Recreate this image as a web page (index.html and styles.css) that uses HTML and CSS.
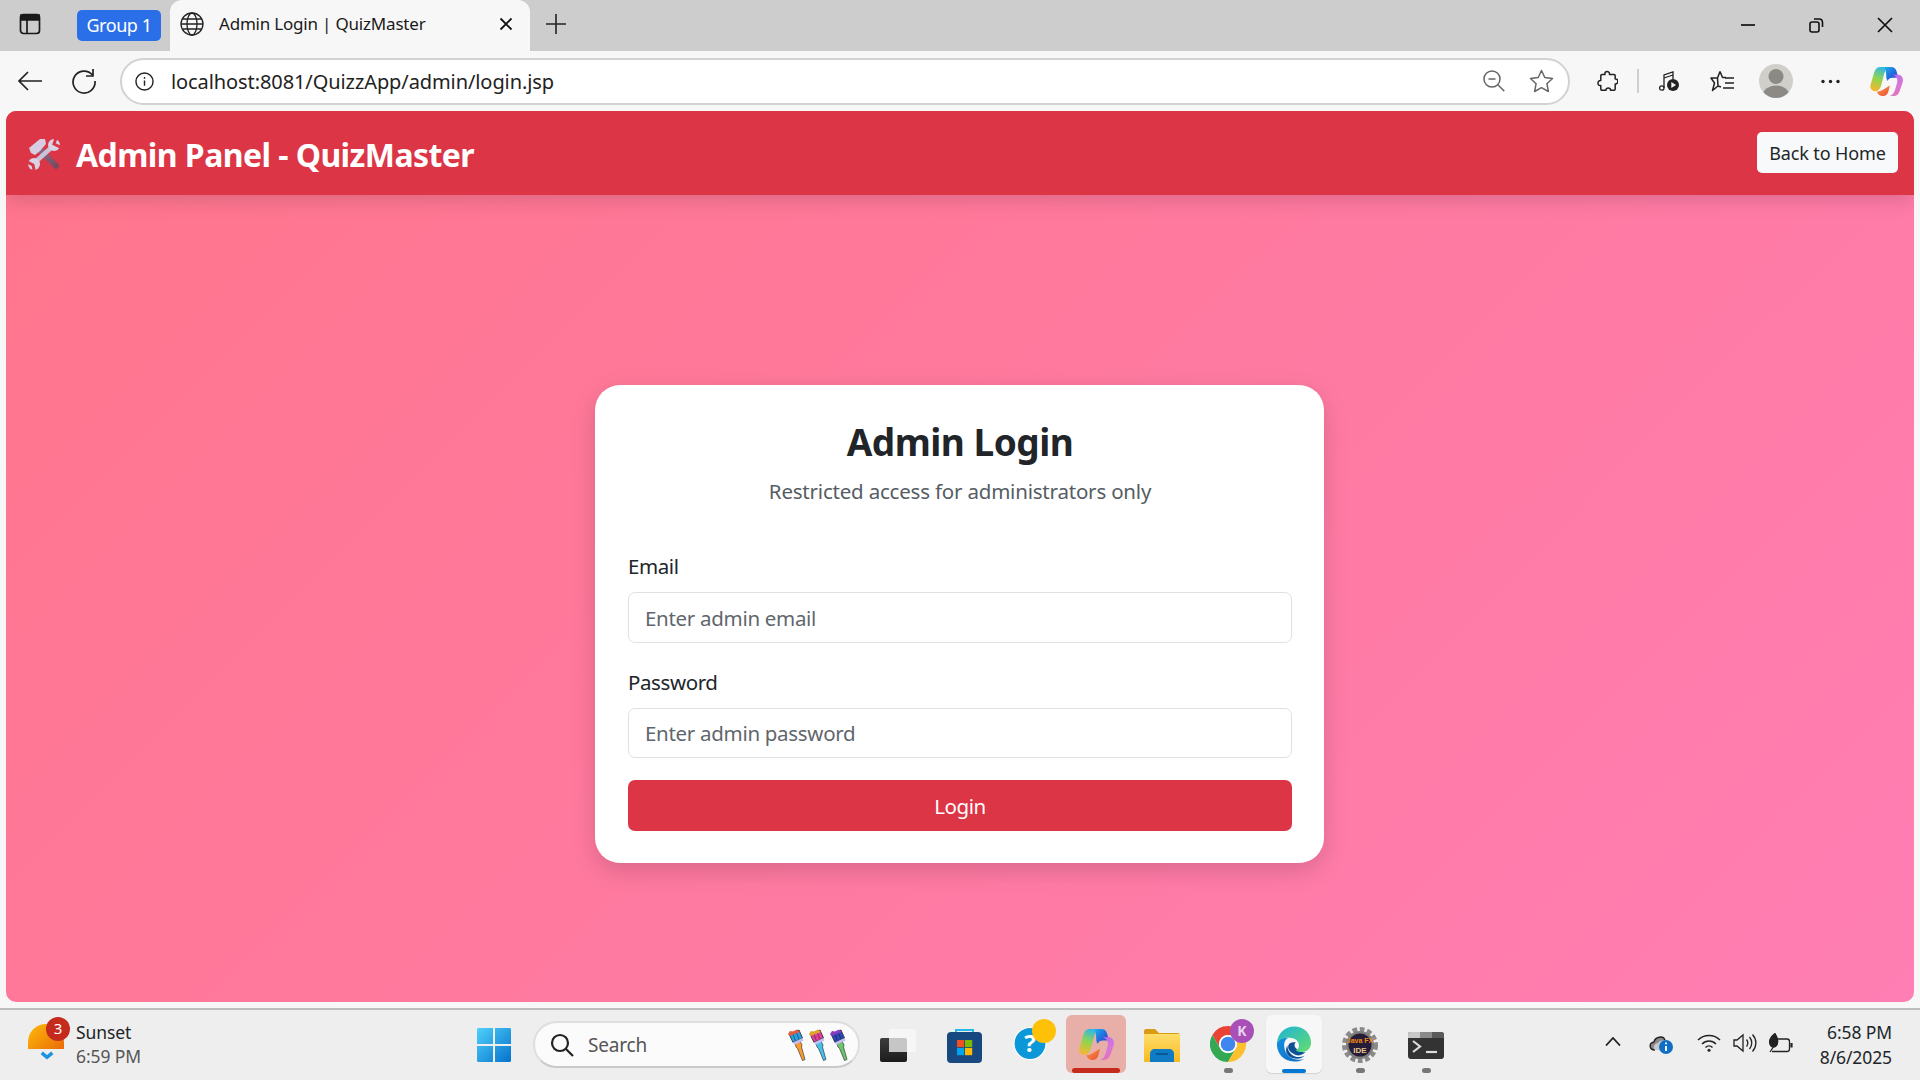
FILE: index.html
```html
<!DOCTYPE html>
<html lang="en">
<head>
  <meta charset="UTF-8">
  <meta name="viewport" content="width=device-width, initial-scale=1.0">
  <title>Admin Login | QuizMaster</title>
  <link rel="stylesheet" href="styles.css">
</head>
<body>
  <svg class="defs" width="0" height="0">
    <defs>
      <linearGradient id="copilotA" x1="0" y1="0" x2="1" y2="1">
        <stop offset="0" stop-color="#18b4ee"/><stop offset=".6" stop-color="#2560dc"/><stop offset="1" stop-color="#5a48d8"/>
      </linearGradient>
      <linearGradient id="copilotB" x1=".6" y1="0" x2=".3" y2="1">
        <stop offset="0" stop-color="#2fb8e8"/><stop offset=".5" stop-color="#8fd54e"/><stop offset="1" stop-color="#f8b62e"/>
      </linearGradient>
      <linearGradient id="copilotC" x1="0" y1="0" x2="1" y2="1">
        <stop offset="0" stop-color="#f6a13a"/><stop offset="1" stop-color="#ee4a3c"/>
      </linearGradient>
      <linearGradient id="copilotD" x1=".2" y1="0" x2=".8" y2="1">
        <stop offset="0" stop-color="#b86cf0"/><stop offset=".6" stop-color="#d877d8"/><stop offset="1" stop-color="#f0709a"/>
      </linearGradient>
      <symbol id="copilot" viewBox="0 0 34 32">
        <path fill="url(#copilotB)" d="M10 1h10c-3 1.500-4.500 4-5.500 7.500L11.500 20c-1 4-3.500 6-6.500 6-3.500 0-5.500-3-4.500-6.500L4 7.500C5 3.500 7 1 10 1z"/>
        <path fill="url(#copilotA)" d="M15 1h7c2.500 0 4.500 1.500 5.200 4l2 7h-6c-2.500 0-4.200 1-5 3.500L17 13c-.5-2 0-8-2-12z"/>
        <path fill="url(#copilotD)" d="M23 9h6c3 0 5 2.500 5 5.500 0 1-.2 2-.5 3l-3 8.500c-1.200 3.500-3.500 5-6 5h-4c3-1 4.500-3.500 5.500-7l2-7c.8-3.500-.5-6.500-5-8z"/>
        <path fill="url(#copilotC)" d="M7 26c2 .5 3.500 0 5.500-1l8-5-1.500 6c-.8 3-2.500 5-5.500 5h-1c-2 0-3.500-1-4.500-2.500z"/>
      </symbol>
      <symbol id="brush" viewBox="0 0 20 32">
        <path fill="currentColor" stroke="#222" stroke-width=".6" d="M8 14l5-2 2 4-.5 2 3.500 12.500-2.500 1-5-12-1.500-1.500z"/>
        <path d="M2 5l10-4 3.500 8-9.500 4.500z" fill="var(--tip)" stroke="#222" stroke-width=".8"/>
        <path d="M5.500 4l2.800 7.500M9 3l3 7" stroke="#111" stroke-opacity=".45" stroke-width="1" fill="none"/>
        <path d="M1 5l2-3 3 .5 4-2 3 2.500L2.500 7z" fill="var(--cap)"/>
        <path d="M6 13.500l9.500-4.500 1 2.500L7.500 16z" fill="#c4bff2"/>
      </symbol>
    </defs>
  </svg>

  <div class="tabstrip">
    <svg class="sidebar-icon" width="24" height="24" viewBox="0 0 24 24" fill="none" stroke="#1a1a1a" stroke-width="1.700">
      <rect x="2.500" y="2.500" width="19" height="19" rx="3"/>
      <path d="M3 3h18v5H3z" fill="#1a1a1a"/>
      <path d="M9 8v13"/>
    </svg>
    <span class="tab-group">Group 1</span>
    <div class="tab">
      <svg width="24" height="24" viewBox="0 0 24 24" fill="none" stroke="#222" stroke-width="1.300">
        <circle cx="12" cy="12" r="11"/>
        <ellipse cx="12" cy="12" rx="5" ry="11"/>
        <path d="M1 12h22M2.500 7h19M2.500 17h19"/>
      </svg>
      <span class="tab-title">Admin Login | QuizMaster</span>
      <svg class="tab-close" width="14" height="14" viewBox="0 0 14 14" stroke="#111" stroke-width="1.800"><path d="M1.500 1.500l11 11M12.500 1.500l-11 11"/></svg>
    </div>
    <svg class="new-tab" width="22" height="22" viewBox="0 0 22 22" stroke="#222" stroke-width="1.600"><path d="M11 1v20M1 11h20"/></svg>
    <div class="window-btns">
      <svg width="16" height="16" viewBox="0 0 16 16" stroke="#111" stroke-width="1.700"><path d="M1 8h14"/></svg>
      <svg width="16" height="16" viewBox="0 0 16 16" fill="none" stroke="#111" stroke-width="1.600"><rect x="2" y="5" width="9" height="10" rx="2"/><path d="M6 2h5c2 0 3.500 1.500 3.500 3.500V10"/></svg>
      <svg width="18" height="18" viewBox="0 0 18 18" stroke="#111" stroke-width="1.700"><path d="M2 2l14 14M16 2L2 16"/></svg>
    </div>
  </div>

  <div class="toolbar">
    <svg class="tool-back" width="26" height="24" viewBox="0 0 26 24" fill="none" stroke="#222" stroke-width="1.700"><path d="M25 12H2M11 3l-9 9 9 9"/></svg>
    <svg class="tool-reload" width="26" height="26" viewBox="0 0 26 26" fill="none" stroke="#222" stroke-width="1.700"><path d="M21.500 7A11 11 0 1 0 24 13"/><path d="M22 1v7h-7"/></svg>
    <div class="address-bar">
      <svg width="19" height="19" viewBox="0 0 20 20" fill="none" stroke="#222" stroke-width="1.500"><circle cx="10" cy="10" r="9"/><path d="M10 9v5.500M10 5.200v1.800"/></svg>
      <span class="url">localhost:8081/QuizzApp/admin/login.jsp</span>
      <svg class="addr-zoom" width="22" height="22" viewBox="0 0 22 22" fill="none" stroke="#666" stroke-width="1.500"><circle cx="9" cy="9" r="8"/><path d="M5.500 9h7M14.800 14.800l6.500 6.500"/></svg>
      <svg class="addr-star" width="25" height="24" viewBox="0 0 25 24" fill="none" stroke="#666" stroke-width="1.500" stroke-linejoin="round"><path d="M12.500 1.500l3.300 7 7.700 1-5.600 5.200 1.500 7.800-6.900-3.800-6.900 3.800 1.500-7.800L1.500 9.500l7.700-1z"/></svg>
    </div>
    <div class="tool-icons">
      <svg class="ti-ext" width="21" height="23" viewBox="0 0 21 23" fill="none" stroke="#222" stroke-width="1.500" stroke-linejoin="round"><path d="M8 4.500C7 .5 13 .5 12.500 4.500H17c.8 0 1.200.5 1.200 1.200v3.300c3.500-.8 3.500 5.500 0 5V19c0 .8-.5 1.200-1.200 1.200h-3.500c.6-2.800-5-2.800-4.500 0H5c-.8 0-1.200-.5-1.200-1.200v-3.500C0 16.500 0 10 3.800 10.500V5.700c0-.8.500-1.200 1.200-1.200z"/></svg>
      <span class="tool-sep"></span>
      <svg class="ti-music" width="20" height="20" viewBox="0 0 20 20" fill="none" stroke="#222" stroke-width="1.300"><circle cx="2.800" cy="17" r="2.200"/><path d="M5 17V4l9-3v7M5 7l9-3"/><circle cx="14" cy="14" r="6" fill="#222" stroke="none"/><path d="M12.300 11v6l4.700-3z" fill="#f7f7f7" stroke="none"/></svg>
      <svg class="ti-fav" width="24" height="22" viewBox="0 0 24 22" fill="none" stroke="#222" stroke-width="1.500" stroke-linejoin="round"><path d="M10 1.500l2.500 6H16M8 16l-5.500 4.500L4.500 13 1 8h6.500z M10 1.500L7.500 8M8 16l3 1"/><path d="M15 8h9M15 13h9M13 18h11"/></svg>
      <svg class="ti-avatar" width="34" height="34" viewBox="0 0 34 34"><defs><clipPath id="avatarClip"><circle cx="17" cy="17" r="17"/></clipPath></defs><circle cx="17" cy="17" r="17" fill="#d0cfca"/><g clip-path="url(#avatarClip)"><circle cx="17" cy="12.500" r="7.500" fill="#8d8a85"/><ellipse cx="17" cy="31" rx="13" ry="9.500" fill="#8d8a85"/></g></svg>
      <svg class="ti-dots" width="19" height="5" viewBox="0 0 19 5" fill="#222"><circle cx="2" cy="2.500" r="1.700"/><circle cx="9.500" cy="2.500" r="1.700"/><circle cx="17" cy="2.500" r="1.700"/></svg>
      <svg class="ti-copilot" width="33" height="31"><use href="#copilot"/></svg>
    </div>
  </div>

  <div class="page">
    <header class="page-header">
      <h1 class="brand">
        <svg class="brand-icon" width="32" height="32" viewBox="0 0 32 32">
          <defs><linearGradient id="hammerHandle" x1="0" y1="0" x2="1" y2="1"><stop offset="0" stop-color="#8a6a8a"/><stop offset="1" stop-color="#7a4a5e"/></linearGradient></defs>
          <path d="M12 12l16 16" stroke="url(#hammerHandle)" stroke-width="6" stroke-linecap="round"/>
          <path d="M1 10L12 1h5l1 5-6 7-5 4-4-2z" fill="#d6cde2"/>
          <path d="M5 26L24 9" stroke="#cbc3da" stroke-width="4.500"/>
          <circle cx="26" cy="7" r="6" fill="#d9d1e4"/>
          <path d="M28 0l-2 6 6 3" stroke="#dc3545" stroke-width="3" fill="none"/>
          <circle cx="6" cy="26" r="6" fill="#d9d1e4"/>
          <path d="M-1 24l6 3 1 5" stroke="#dc3545" stroke-width="3" fill="none"/>
        </svg>
        Admin Panel - QuizMaster
      </h1>
      <a class="btn-home" href="#">Back to Home</a>
    </header>

    <main class="login-wrap">
      <form class="login-card">
        <h2>Admin Login</h2>
        <p class="login-sub">Restricted access for administrators only</p>
        <label for="email">Email</label>
        <input type="email" id="email" placeholder="Enter admin email">
        <label for="password">Password</label>
        <input type="password" id="password" placeholder="Enter admin password">
        <button type="submit">Login</button>
      </form>
    </main>
  </div>

  <footer class="taskbar">
    <div class="weather">
      <div class="weather-icon">
        <span class="sun"></span>
        <span class="weather-badge">3</span>
        <svg class="weather-arrow" width="14" height="9" viewBox="0 0 16 10" fill="none" stroke="#1c93e0" stroke-width="4"><path d="M2 2l6 5 6-5"/></svg>
      </div>
      <div class="weather-text">
        <span>Sunset</span>
        <span class="muted">6:59 PM</span>
      </div>
    </div>

    <div class="task-center">
      <div class="slot slot-start">
        <svg width="36" height="36" viewBox="0 0 36 36">
          <defs><linearGradient id="win" x1="0" y1="0" x2="1" y2="1"><stop offset="0" stop-color="#4fd0fb"/><stop offset="1" stop-color="#0672cc"/></linearGradient></defs>
          <path fill="url(#win)" d="M1 2.500C1 1.700 1.700 1 2.500 1H17v16H1zM19 1h14.500c.8 0 1.500.7 1.500 1.500V17H19zM1 19h16v16H2.500C1.700 35 1 34.300 1 33.500zM19 19h16v14.500c0 .8-.7 1.500-1.500 1.500H19z"/>
        </svg>
      </div>
      <div class="search">
        <svg width="24" height="24" viewBox="0 0 24 24" fill="none" stroke="#222" stroke-width="2.200"><circle cx="10" cy="10" r="8"/><path d="M16 16l7 7"/></svg>
        <span class="search-text">Search</span>
        <div class="brushes">
          <svg class="brush-a" width="20" height="32"><use href="#brush"/></svg>
          <svg class="brush-b" width="20" height="32"><use href="#brush"/></svg>
          <svg class="brush-c" width="20" height="32"><use href="#brush"/></svg>
        </div>
      </div>
      <div class="slot">
        <svg width="36" height="33" viewBox="0 0 36 33">
          <defs><linearGradient id="taskDark" x1="0" y1="0" x2="0" y2="1"><stop offset="0" stop-color="#3c3c3c"/><stop offset="1" stop-color="#1c1c1c"/></linearGradient></defs>
          <rect x="0" y="9" width="27" height="24" rx="2" fill="url(#taskDark)"/>
          <rect x="9" y="0" width="27" height="23" rx="2" fill="#f6f6f6"/>
          <path d="M9 9h16c1.100 0 2 .9 2 2v12H9z" fill="#c6c6c6"/>
        </svg>
      </div>
      <div class="slot">
        <svg width="35" height="35" viewBox="0 0 35 35">
          <path d="M9 6V2h17v4" fill="none" stroke="#29b6e8" stroke-width="2"/>
          <rect y="4" width="35" height="31" rx="4" fill="#17487f"/>
          <rect x="10" y="12" width="7.200" height="7.200" fill="#f25022"/>
          <rect x="18" y="12" width="7.200" height="7.200" fill="#7fba00"/>
          <rect x="10" y="20" width="7.200" height="7.200" fill="#00a4ef"/>
          <rect x="18" y="20" width="7.200" height="7.200" fill="#ffb900"/>
        </svg>
      </div>
      <div class="slot">
        <svg class="icon-help" width="43" height="41" viewBox="0 0 43 41">
          <circle cx="17" cy="24.500" r="16" fill="#0c97d9" stroke="#fff" stroke-width="1.200"/>
          <text x="17" y="33" text-anchor="middle" class="help-mark">?</text>
          <circle cx="31" cy="12" r="12" fill="#ffc107"/>
        </svg>
      </div>
      <div class="slot slot-active">
        <svg width="35" height="33"><use href="#copilot"/></svg>
        <span class="active-bar"></span>
      </div>
      <div class="slot">
        <svg width="36" height="33" viewBox="0 0 36 33">
          <defs><linearGradient id="folderFill" x1="0" y1="0" x2="0" y2="1"><stop offset="0" stop-color="#ffdd6b"/><stop offset="1" stop-color="#f8b91e"/></linearGradient></defs>
          <path d="M0 2c0-1 1-2 2-2h9l4 4h19c1 0 2 1 2 2v4H0z" fill="#d99a14"/>
          <path d="M0 5h35c.6 0 1 .4 1 1v26c0 .6-.4 1-1 1H1c-.6 0-1-.4-1-1z" fill="url(#folderFill)"/>
          <path d="M6 33V25c0-3 2-5 5-5h14c3 0 5 2 5 5v8z" fill="#0f7bc4"/>
          <path d="M12 25h12" stroke="#0a4e86" stroke-width="1.500"/>
        </svg>
      </div>
      <div class="slot">
        <svg class="icon-chrome" width="44" height="43" viewBox="0 0 44 43">
          <g transform="translate(0 7)">
            <path fill="#ea4335" d="M2.400 9A18 18 0 0 1 33.600 9H18A9 9 0 0 0 10.200 22.500z"/>
            <path fill="#34a853" d="M2.400 9A18 18 0 0 0 18 36L25.800 22.500A9 9 0 0 1 10.200 22.500z"/>
            <path fill="#fbc02d" d="M33.600 9A18 18 0 0 1 18 36L25.800 22.500A9 9 0 0 0 18 9z"/>
            <circle cx="18" cy="18" r="9" fill="#fff"/>
            <circle cx="18" cy="18" r="7.300" fill="#3f86ee"/>
          </g>
          <circle cx="32" cy="12" r="12" fill="#a94fb8"/>
          <text x="32" y="17" text-anchor="middle" class="chrome-k">K</text>
        </svg>
        <span class="run-dot"></span>
      </div>
      <div class="slot slot-edge">
        <svg width="36" height="37" viewBox="0 0 38 38">
          <defs>
            <linearGradient id="edgeA" x1="0" y1="0" x2="1" y2="1"><stop offset="0" stop-color="#1bb4d8"/><stop offset="1" stop-color="#66dd6e"/></linearGradient>
            <linearGradient id="edgeB" x1="0" y1="0" x2="1" y2="1"><stop offset="0" stop-color="#1490e0"/><stop offset="1" stop-color="#0f6cc4"/></linearGradient>
          </defs>
          <path fill="url(#edgeB)" d="M1 17C3 13 8 11 13 12 9 14 8 18 9 23c1 7 7 12 15 12 2 0 4 0 6-1-3 2-7 3-11 3C8 37 0 28 1 17z"/>
          <path fill="#0c5098" d="M12 20c0 9 9 15 18 11-3 3-8 4-13 2-6-2-8-8-5-13z"/>
          <path fill="#0c5098" d="M13 20c1-3 5-4 8-3-2 1-2 4 0 6 3 3 7 5 10 4-2 3-8 5-12 2-4-2-7-5-6-9z"/>
          <path fill="url(#edgeA)" d="M1 17C2 7 10 0 19 0c11 0 18 8 18 17 0 7-5 10-10 10-3 0-5-1-6-2 3-1 4-4 3-7-2-5-7-6-11-6-5 0-10 2-12 5z"/>
        </svg>
        <span class="active-pill"></span>
      </div>
      <div class="slot">
        <svg width="36" height="36" viewBox="0 0 36 36">
          <circle cx="18" cy="18" r="15" fill="none" stroke="#8a8a8a" stroke-width="6" stroke-dasharray="4.500 2.500"/>
          <circle cx="18" cy="18" r="14" fill="#807f80"/>
          <circle cx="18" cy="18" r="11.500" fill="#251c38"/>
          <text x="18" y="16" text-anchor="middle" class="ide-top">Java FX</text>
          <text x="18" y="26" text-anchor="middle" class="ide-bottom">IDE</text>
        </svg>
        <span class="run-dot"></span>
      </div>
      <div class="slot">
        <svg width="36" height="27" viewBox="0 0 36 27">
          <rect width="36" height="27" rx="3" fill="#333"/>
          <path d="M0 3c0-2 1-3 3-3h9v6H0z" fill="#c8c8c8"/>
          <rect x="12" width="12" height="6" fill="#8a8a8a"/>
          <path d="M24 0h9c2 0 3 1 3 3v3H24z" fill="#5a5a5a"/>
          <path d="M5 9l7 5.500-7 5.500" fill="none" stroke="#ddd" stroke-width="2.200"/>
          <path d="M18 20h11" stroke="#ddd" stroke-width="2.200"/>
        </svg>
        <span class="run-dot"></span>
      </div>
    </div>

    <div class="tray">
      <svg class="tray-chevron" width="16" height="9" viewBox="0 0 16 9" fill="none" stroke="#222" stroke-width="1.800"><path d="M1 8.500l7-7.500 7 7.500"/></svg>
      <svg class="tray-cloud" width="24" height="21" viewBox="0 0 24 21">
        <path d="M6 17c-6 0-6.500-7-1-8 1-5 9-7 11-2" fill="#8a8a8a" stroke="#222" stroke-width="1.400"/>
        <path d="M6 17c-3-3 0-7 3-7 2-3 6-3 8-1l-3 8z" fill="#c8c8c8"/>
        <circle cx="17" cy="14" r="7" fill="#0f6fc6"/>
        <path d="M17 13v5M17 9.500v1.800" stroke="#fff" stroke-width="1.900"/>
      </svg>
      <svg class="tray-wifi" width="24" height="18" viewBox="0 0 24 18" fill="none" stroke="#222" stroke-width="1.500"><path d="M1 6c6-6 16-6 22 0M5 10c4-4 10-4 14 0M8.500 13.500c2-2 5-2 7 0"/><circle cx="12" cy="16.300" r="1.500" fill="#222" stroke="none"/></svg>
      <svg class="tray-sound" width="24" height="20" viewBox="0 0 24 20" fill="none" stroke="#222" stroke-width="1.300"><path d="M1 7v6h3l6 5V2L4 7z"/><path d="M13.500 6.500c1.500 2 1.500 5 0 7M16.500 4c3 3.500 3 8.500 0 12M19.500 1.500c4.500 5 4.500 12 0 17"/></svg>
      <svg class="tray-battery" width="24" height="20" viewBox="0 0 24 20" fill="none" stroke="#222" stroke-width="1.300"><path d="M8 6h10c1.500 0 2.500 1 2.500 2.500V16c0 1.500-1 2.500-2.500 2.500H3"/><path d="M22.500 10v4.500" stroke-width="2.200"/><path d="M6 .5C1 4-1 9 2 13c1 1.500 3 1.500 4.500.5C10 11 9 5 6 .5z" fill="#222"/><path d="M5 13L1 19"/></svg>
      <div class="clock">
        <span>6:58 PM</span>
        <span>8/6/2025</span>
      </div>
    </div>
  </footer>
</body>
</html>
```

FILE: styles.css
```css
* {
  box-sizing: border-box;
}

body {
  margin: 0;
  height: 1080px;
  display: flex;
  flex-direction: column;
  overflow: hidden;
  font-family: "Noto Sans", "Open Sans", sans-serif;
  background-color: #f7f7f7;
  color: #212529;
}

.defs {
  position: absolute;
}

svg {
  display: block;
  flex-shrink: 0;
}

/* browser chrome */
.tabstrip {
  height: 51px;
  display: flex;
  align-items: flex-start;
  background-color: #cdcdcd;
}

.sidebar-icon {
  margin: 12px 0 0 18px;
}

.tab-group {
  width: 84px;
  height: 31px;
  margin: 10px 0 0 35px;
  border-radius: 5px;
  background-color: #2b6fe8;
  color: #fff;
  font-size: 18px;
  line-height: 30px;
  text-align: center;
  letter-spacing: -0.45px;
}

.tab {
  width: 360px;
  height: 51px;
  margin-left: 9px;
  padding: 0 17px 3px 10px;
  display: flex;
  align-items: center;
  border-radius: 12px 12px 0 0;
  background-color: #f7f7f7;
}

.tab-title {
  flex: 1;
  margin: -2px 0 0 15px;
  font-size: 17px;
  letter-spacing: -0.2px;
  color: #1a1a1a;
}

.new-tab {
  margin: 13px 0 0 15px;
}

.window-btns {
  margin-left: auto;
  width: 230px;
  height: 51px;
  padding: 0 26px 2px 50px;
  display: flex;
  align-items: center;
  justify-content: space-between;
}

.toolbar {
  height: 60px;
  display: flex;
  align-items: center;
  background-color: #f7f7f7;
}

.tool-back {
  margin-left: 17px;
}

.tool-reload {
  margin-left: 28px;
}

.address-bar {
  width: 1450px;
  height: 47px;
  margin-left: 23px;
  padding: 0 14px 0 13px;
  display: flex;
  align-items: center;
  border: 2px solid #d2d2d2;
  border-radius: 24px;
  background-color: #fff;
}

.url {
  margin-left: 17px;
  font-size: 20px;
  letter-spacing: -0.09px;
  color: #222;
}

.addr-zoom {
  margin-left: auto;
}

.addr-star {
  margin-left: 24px;
}

.tool-icons {
  flex: 1;
  padding-left: 27px;
  display: flex;
  align-items: center;
}

.tool-sep {
  width: 2px;
  height: 24px;
  margin-left: 19px;
  background-color: #cfcfcf;
}

.ti-music {
  margin-left: 20px;
}

.ti-fav {
  margin-left: 31px;
}

.ti-avatar {
  margin-left: 25px;
}

.ti-dots {
  margin-left: 28px;
}

.ti-copilot {
  margin-left: 30px;
}

/* page */
.page {
  height: 891px;
  margin: 0 6px;
  display: flex;
  flex-direction: column;
  border-radius: 10px;
  overflow: hidden;
  background: linear-gradient(135deg, #ff758c, #ff7eb3);
}

.page-header {
  height: 84px;
  padding: 0 16px 0 22px;
  display: flex;
  align-items: center;
  justify-content: space-between;
  background-color: #dc3545;
  box-shadow: 0 4px 20px rgba(0, 0, 0, 0.15);
}

.brand {
  margin: 2px 0 0;
  display: flex;
  align-items: center;
  gap: 16px;
  color: #fff;
  font-size: 32px;
  font-weight: 700;
  letter-spacing: -0.57px;
}

.btn-home {
  width: 141px;
  height: 41px;
  margin-bottom: 1px;
  border-radius: 5px;
  background-color: #f8f9fa;
  color: #212529;
  font-size: 18px;
  line-height: 43px;
  letter-spacing: -0.12px;
  text-align: center;
  text-decoration: none;
}

.login-wrap {
  flex: 1;
  padding: 190px 1px 0 0;
  display: flex;
  justify-content: center;
  align-items: flex-start;
}

.login-card {
  width: 729px;
  height: 478px;
  padding: 33px 32px 0 33px;
  border-radius: 25px;
  background-color: #fff;
  box-shadow: 0 8px 25px rgba(0, 0, 0, 0.15);
}

.login-card h2 {
  margin: 0;
  font-size: 37px;
  line-height: 48px;
  font-weight: 700;
  letter-spacing: -0.5px;
  text-align: center;
}

.login-sub {
  margin: 10px 0 45px;
  font-size: 20.500px;
  line-height: 30px;
  letter-spacing: -0.2px;
  text-align: center;
  color: #555c63;
}

.login-card label {
  display: block;
  margin-bottom: 11px;
  font-size: 20.500px;
  line-height: 30px;
  letter-spacing: -0.4px;
}

.login-card input {
  display: block;
  width: 100%;
  height: 51px;
  margin-bottom: 24px;
  padding: 0 16px;
  border: 1px solid #dee2e6;
  border-radius: 7px;
  font-family: inherit;
  font-size: 20.500px;
  letter-spacing: -0.3px;
}

.login-card input:last-of-type {
  height: 50px;
  margin-bottom: 22px;
}

.login-card input::placeholder {
  color: #5f666d;
  opacity: 1;
}

.login-card button {
  display: block;
  width: 100%;
  height: 51px;
  border: none;
  border-radius: 7px;
  background-color: #dc3545;
  color: #fff;
  font-family: inherit;
  font-size: 20.500px;
  letter-spacing: -0.4px;
  cursor: pointer;
}

/* taskbar */
.taskbar {
  height: 72px;
  margin-top: 6px;
  display: flex;
  align-items: stretch;
  border-top: 2px solid #bdbdbd;
  background-color: #eeeeee;
}

.weather {
  width: 461px;
  padding: 0 0 2px 28px;
  display: flex;
  align-items: center;
  gap: 12px;
}

.weather-icon {
  width: 36px;
  height: 44px;
  position: relative;
}

.sun {
  display: block;
  width: 36px;
  height: 25px;
  margin-top: 2px;
  border-radius: 18px 18px 0 0;
  background: linear-gradient(135deg, #fdbb0b, #ea6a06);
}

.weather-badge {
  position: absolute;
  top: -5px;
  left: 18px;
  width: 24px;
  height: 24px;
  border-radius: 50%;
  background-color: #c42b1c;
  color: #fff;
  font-size: 15px;
  line-height: 23px;
  text-align: center;
}

.weather-arrow {
  margin: 2px 0 0 12px;
}

.weather-text {
  display: flex;
  flex-direction: column;
  font-size: 17.500px;
  line-height: 24px;
  letter-spacing: -0.1px;
}

.muted {
  color: #555;
}

.task-center {
  display: flex;
  align-items: center;
}

.slot {
  width: 66px;
  height: 70px;
  display: flex;
  align-items: center;
  justify-content: center;
  position: relative;
}

.slot-start {
  margin-right: 6px;
}

.slot-active {
  width: 60px;
  height: 58px;
  margin: -2px 3px 0;
  border-radius: 6px;
  background-color: #e8afa9;
}

.active-bar {
  position: absolute;
  left: 6px;
  right: 6px;
  bottom: 0;
  height: 5px;
  border-radius: 3px;
  background-color: #c42b1c;
}

.slot-edge {
  width: 56px;
  height: 58px;
  margin: -2px 5px 0;
  border-radius: 6px;
  background-color: #f7f7f7;
  box-shadow: 0 1px 1px rgba(0, 0, 0, 0.12);
}

.active-pill {
  position: absolute;
  left: 16px;
  bottom: 0;
  width: 24px;
  height: 4px;
  border-radius: 2px;
  background-color: #0078d4;
}

.run-dot {
  position: absolute;
  left: 29px;
  bottom: 7px;
  width: 9px;
  height: 5px;
  border-radius: 3px;
  background-color: #777;
}

.icon-help {
  margin: -11px 0 0 9px;
}

.icon-chrome {
  margin: -9px 0 0 8px;
}

.search {
  width: 327px;
  height: 47px;
  margin: -1px 5px 0 0;
  padding: 0 9px 0 15px;
  display: flex;
  align-items: center;
  border: 2px solid #dedede;
  border-bottom-color: #c9c9c9;
  border-radius: 24px;
  background-color: #fbfbfb;
}

.search-text {
  margin-left: 14px;
  font-size: 19px;
  letter-spacing: -0.2px;
  color: #555;
}

.brushes {
  margin-left: auto;
  display: flex;
  gap: 1px;
}

.brush-a {
  color: #fb9a33;
  --tip: #2b9fe0;
  --cap: #e25c3c;
}

.brush-b {
  color: #45c0ec;
  --tip: #e0409a;
  --cap: #e0a62a;
}

.brush-c {
  color: #6cc46c;
  --tip: #2a48b8;
  --cap: #8a3cc0;
}

.help-mark {
  font-family: "Noto Sans", sans-serif;
  font-size: 24px;
  font-weight: 700;
  fill: #fff;
}

.chrome-k {
  font-family: "Noto Sans", sans-serif;
  font-size: 14px;
  font-weight: 700;
  fill: #e8d4ee;
}

.ide-top {
  font-family: "Liberation Sans", sans-serif;
  font-size: 7px;
  font-weight: 700;
  fill: #f08a1a;
}

.ide-bottom {
  font-family: "Liberation Sans", sans-serif;
  font-size: 8px;
  font-weight: 700;
  fill: #e8c88a;
}

.tray {
  flex: 1;
  padding: 0 28px 0 146px;
  display: flex;
  align-items: center;
}

.tray-chevron {
  margin-bottom: 4px;
}

.tray-cloud {
  margin-left: 28px;
}

.tray-wifi {
  margin-left: 24px;
}

.tray-sound {
  margin-left: 12px;
}

.tray-battery {
  margin-left: 12px;
}

.tray svg {
  margin-top: -4px;
}

.clock {
  margin-left: auto;
  display: flex;
  flex-direction: column;
  text-align: right;
  font-size: 17.500px;
  line-height: 25px;
  letter-spacing: -0.1px;
}
```
